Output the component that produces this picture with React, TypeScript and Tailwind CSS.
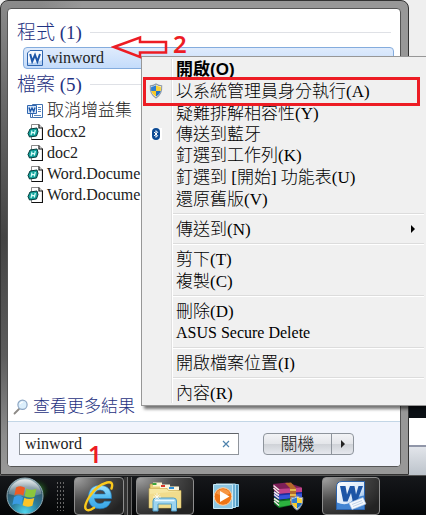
import React from 'react';
import { Bluetooth } from 'lucide-react';

type FileKind = 'doc' | 'shortcut';

const FILES: { name: string; kind: FileKind; cjk?: boolean }[] = [
  { name: '取消增益集', kind: 'doc', cjk: true },
  { name: 'docx2', kind: 'shortcut' },
  { name: 'doc2', kind: 'shortcut' },
  { name: 'Word.Docume', kind: 'shortcut' },
  { name: 'Word.Docume', kind: 'shortcut' },
];

interface MenuEntry {
  label: string;
  icon?: 'shield' | 'bluetooth';
  bold?: boolean;
  latin?: boolean;
  submenu?: boolean;
}

const MENU_GROUPS: MenuEntry[][] = [
  [
    { label: '開啟(O)', bold: true },
    { label: '以系統管理員身分執行(A)', icon: 'shield' },
    { label: '疑難排解相容性(Y)' },
    { label: '傳送到藍牙', icon: 'bluetooth' },
    { label: '釘選到工作列(K)' },
    { label: '釘選到 [開始] 功能表(U)' },
    { label: '還原舊版(V)' },
  ],
  [{ label: '傳送到(N)', submenu: true }],
  [{ label: '剪下(T)' }, { label: '複製(C)' }],
  [{ label: '刪除(D)' }, { label: 'ASUS Secure Delete', latin: true }],
  [{ label: '開啟檔案位置(I)' }],
  [{ label: '內容(R)' }],
];

const WordIcon = () => (
  <svg viewBox="0 0 16 16" className="w-4 h-4 shrink-0">
    <path d="M3 .5h12.5v15H.5V3z" fill="#f4f8fe" stroke="#2f66b0" />
    <path d="M1 12.500q7 2 14-2.500v5H1z" fill="#b7d2f3" />
    <path d="M3.200 4l2 7.500L8 5l2.400 6.500L13 4" fill="none" stroke="#1c56a8" strokeWidth="2" />
  </svg>
);

const DocIcon = () => (
  <svg viewBox="0 0 16 16" className="w-4 h-4 shrink-0">
    <path d="M5.500 1.500h10v13h-10z" fill="#fff" stroke="#3f6fae" />
    <path d="M11 4.500h3M11 6.500h3M11 8.500h3M7 12.500h7" stroke="#5684bd" />
    <path d="M.5 2.500h9v8h-9z" fill="#d5e5f8" stroke="#2f66b0" />
    <path d="M2 4.500l1.300 4L5 5l1.700 3.500 1.300-4" fill="none" stroke="#1c56a8" strokeWidth="1.400" />
    <path d="M3.500 10.500v4h2" fill="none" stroke="#3f6fae" />
  </svg>
);

const ShortcutIcon = () => (
  <svg viewBox="0 0 16 16" className="w-4 h-4 shrink-0">
    <path d="M4.500.5h7.500l3.500 3.500v11.500h-11z" fill="#fff" stroke="#8a8a8a" />
    <path d="M12 .5V4h3.500v11.500H4.500" fill="none" stroke="#111" strokeWidth="1.200" />
    <path d="M3 5l7-1 1 3.500-1.500 4.500-7 1-1.500-3.500z" fill="#12a39c" stroke="#053c3c" />
    <path d="M5 6.500L4 11M8.300 6L7.300 10.500M4.500 8.800l3.500-.5" fill="none" stroke="#d8fffa" strokeWidth="1.200" />
  </svg>
);

const ShieldIcon = ({ className }: { className: string }) => (
  <svg viewBox="0 0 16 18" className={className}>
    <path d="M8 1q3 2 6.500 2 .8 9.500-6.500 14Q.7 12.500 1.500 3 5 3 8 1z" fill="#fff" stroke="#8b98a7" strokeWidth="1.200" />
    <path d="M8 2.500v6.500H2.500q-.3-2.500 0-4.800Q5.500 4 8 2.500z" fill="#2e7dd1" />
    <path d="M8 2.500q2.500 1.500 5.500 1.700.3 2.300 0 4.800H8z" fill="#fad337" />
    <path d="M2.500 9H8v6.700Q3.500 13 2.500 9z" fill="#f7c929" />
    <path d="M8 9h5.500Q12.500 13 8 15.700z" fill="#2470c4" />
  </svg>
);

const SearchIcon = () => (
  <svg viewBox="0 0 16 16" className="w-4 h-4 shrink-0">
    <path d="M6 10l-4.500 4.500" stroke="#8d8a86" strokeWidth="1.800" strokeLinecap="round" />
    <circle cx="9.500" cy="5.800" r="4.600" fill="#dceffc" stroke="#8da6c4" strokeWidth="1.200" />
    <path d="M7 5q1-2 3-2" fill="none" stroke="#fff" strokeWidth="1.200" />
  </svg>
);

const StartOrb = () => (
  <svg viewBox="0 0 50 40" className="w-[50px] h-10">
    <defs>
      <radialGradient id="orb" cx=".5" cy=".95" r=".95">
        <stop offset="0" stopColor="#4fd6ee" />
        <stop offset=".4" stopColor="#2b7d9c" />
        <stop offset=".75" stopColor="#35586a" />
        <stop offset="1" stopColor="#a9bcc2" />
      </radialGradient>
      <radialGradient id="orbGlow">
        <stop offset="0" stopColor="#3fae3a" stopOpacity=".9" />
        <stop offset="1" stopColor="#0a200c" stopOpacity="0" />
      </radialGradient>
      <linearGradient id="orbShine" x1="0" y1="0" x2="0" y2="1">
        <stop offset="0" stopColor="#fff" stopOpacity=".75" />
        <stop offset="1" stopColor="#fff" stopOpacity=".15" />
      </linearGradient>
    </defs>
    <circle cx="38" cy="14" r="12" fill="url(#orbGlow)" />
    <circle cx="25" cy="20" r="18" fill="url(#orb)" stroke="#8fa9b3" />
    <path d="M8.500 18a16.600 16.600 0 0 1 33 0q-15 5-33 0z" fill="url(#orbShine)" />
    <path d="M16 11.500q4.500-2.800 9 .2l-1.700 8q-4.500-2.600-9-.2z" fill="#ee5a24" />
    <path d="M26.300 12.500q4.500 2.400 10.200.2l-1.900 8q-5 2-10-.4z" fill="#8cc63c" />
    <path d="M14 21q4.500-2.400 9 .2l-1.700 8q-4.500-2.600-9-.2z" fill="#3a9be4" />
    <path d="M24.300 21.700q4.500 2.400 10 .2l-1.900 7.800q-5 2.200-9.800-.4z" fill="#fcc428" />
  </svg>
);

const IeIcon = () => (
  <svg viewBox="0 0 32 32" className="w-8 h-8">
    <defs>
      <linearGradient id="ie" x1="0" y1="0" x2="0" y2="1">
        <stop offset="0" stopColor="#a5e4fc" />
        <stop offset=".5" stopColor="#54bdf2" />
        <stop offset="1" stopColor="#39a4e6" />
      </linearGradient>
    </defs>
    <path
      d="M28.500 18.500H11.500q.5 5 5.500 5 3 0 4.500-2.300h6.500Q25 28.800 17 28.800 5.500 28.500 5.300 17 5.800 5.500 17 5.200 29 5.700 28.500 18.500zM11.700 14h10.600q-.8-4-5.200-4-4.400 0-5.400 4z"
      fill="url(#ie)"
      stroke="#1c77b8"
      strokeWidth=".6"
      fillRule="evenodd"
    />
    <path d="M28.500 8.500Q31 1 24 2.500 14 5 6.500 16.500-.5 28 4 30q2.500 1 7-2.200" fill="none" stroke="#fbc91c" strokeWidth="2.400" strokeLinecap="round" />
  </svg>
);

const ExplorerIcon = () => (
  <svg viewBox="0 0 34 32" className="w-[34px] h-8">
    <path d="M2 4h9l2 3h17v18H2z" fill="#e7ce79" stroke="#a98b36" strokeWidth=".6" />
    <path d="M5 2.500h9v4H5z" fill="#fff6cf" />
    <path d="M4.500 3h4v2h-4z" fill="#3aa53a" />
    <path d="M12 4.500h10v4H12z" fill="#fdf6dd" />
    <path d="M13 5h4v2h-4z" fill="#d8372a" />
    <path d="M20 6.500h11v4H20z" fill="#fdf6dd" />
    <path d="M21 7h5v2h-5z" fill="#2d8fd8" />
    <path d="M1 8.500h18l1.500 2H33V28H1z" fill="#f6e7a2" stroke="#c8a84c" strokeWidth=".6" />
    <path d="M1.500 14L33 11v16.500H1.500z" fill="#efd67f" opacity=".6" />
    <path d="M5 31V21q0-3 3-3h17.500q3 0 3 3v10h-5v-7h-13.500v7z" fill="#9dd4ef" stroke="#4f9cc5" />
    <path d="M7 20.500h19.500" stroke="#e8f8ff" strokeWidth="1.500" />
    <path d="M9 13v8M5 17h8M6.500 14.500l5 5M11.500 14.500l-5 5" stroke="#fff" strokeWidth=".7" />
  </svg>
);

const PlayerIcon = () => (
  <svg viewBox="0 0 28 28" className="w-7 h-7">
    <path d="M7 2.500h19.500v22H7z" fill="#4d96bd" stroke="#9bd0ea" />
    <path d="M4 2h19.500v23.500H4z" fill="#6db0d4" stroke="#b5e0f2" />
    <path d="M1.500 2.500h19v24h-19z" fill="#8cc6e2" stroke="#c8e9f6" />
    <circle cx="11" cy="14.500" r="8.800" fill="#ee7414" stroke="#ffd1a2" />
    <path d="M4 11.500a8 8 0 0 1 14 0q-6 4-14 0z" fill="#fba557" opacity=".7" />
    <path d="M8 9l9.500 5.500L8 20z" fill="#fff" />
  </svg>
);

const RarIcon = () => (
  <div className="relative w-8 h-7">
    <svg viewBox="0 0 32 28" className="w-8 h-7">
      <path d="M1 2l14-1.500L29 5v6L7 12l-5-3z" fill="#7d1f58" />
      <path d="M7 7l23-1.500V10L7 12z" fill="#c0448a" />
      <path d="M2 9l5 3 23-2v5L7 18l-5-3z" fill="#1a2ea4" />
      <path d="M7 13.500l23-2V15L7 17.500z" fill="#3554da" />
      <path d="M2 15l5 3 23-3v6L7 26l-5-4z" fill="#0c7024" />
      <path d="M7 19.500L30 17v4L7 25z" fill="#2cb33f" />
      <path d="M1.500 3.500L7 8M1.500 6L7 11M2 10l5 3.500M2 12.500l5 4M2 16.500l5 3.500M2 19l5 4.500" stroke="#f3e7e7" strokeWidth="1.600" />
      <path d="M13 1l6-.5L24 6v17h-6V6z" fill="#b5692b" />
      <path d="M18 8h6M18 13h6M18 18h6" stroke="#f2d45b" strokeWidth="1.500" />
    </svg>
    <ShieldIcon className="absolute -bottom-px right-0 w-[14px] h-4" />
  </div>
);

const WordAppIcon = () => (
  <svg viewBox="0 0 32 32" className="w-8 h-8">
    <defs>
      <linearGradient id="wordPage" x1="0" y1="0" x2="1" y2="1">
        <stop offset="0" stopColor="#ffffff" />
        <stop offset=".6" stopColor="#d6e6f8" />
        <stop offset="1" stopColor="#3f82cf" />
      </linearGradient>
    </defs>
    <path d="M7 1.500h22.500v28H1.500V7q0-5.500 5.500-5.500z" fill="url(#wordPage)" stroke="#2b62ab" />
    <path d="M2 22.500q12 5 18-5l9-2V29H2z" fill="#4284d2" />
    <path d="M5 6h5.500l1.500 8.500L15 6h4.500l1.500 8.500L23.500 6H28l-6 15.500h-4.200L16 13l-3.500 8.500H8.300z" fill="#1d55a6" />
    <path d="M14 23l14-5.500 3 6.500-14 5.500z" fill="#f4f8fd" stroke="#a9c3e2" strokeWidth=".6" />
    <path d="M17 24.500l10-4M18 26.500l10-4" stroke="#c3d4e9" />
  </svg>
);

const SectionHeading = ({ children }: { children: React.ReactNode }) => (
  <h2 className="flex h-[30px] items-center gap-2 px-[9px] text-[19px] leading-none text-[#1f3282]">
    <span className="whitespace-nowrap">{children}</span>
    <span className="h-px flex-1 bg-[#dfe1e6]" />
  </h2>
);

const ContextMenu = () => (
  <div
    role="menu"
    className="absolute left-[141px] right-0 top-14 border border-r-0 border-[#979797] bg-[#f0f0f0] py-px text-[17px] text-black shadow-[3px_3px_3px_rgba(0,0,0,0.55)]"
  >
    <div className="absolute inset-y-0.5 left-[29px] w-0.5 border-l border-[#e0e0e0] bg-white" />
    {MENU_GROUPS.map((group, g) => (
      <div key={g}>
        {g > 0 && (
          <div className="ml-[31px] mr-0.5 flex h-2 items-center">
            <div className="h-0.5 w-full border-t border-[#dcdcdc] bg-white" />
          </div>
        )}
        {group.map((item) => (
          <button
            key={item.label}
            role="menuitem"
            className={`relative flex w-full items-center text-left leading-none whitespace-nowrap ${item.icon === 'bluetooth' ? 'h-5' : 'h-[22px]'}`}
          >
            <span className="flex w-[34px] shrink-0 justify-center pr-[7px]">
              {item.icon === 'shield' && <ShieldIcon className="h-4 w-[14px]" />}
              {item.icon === 'bluetooth' && (
                <span className="flex h-3 w-3 items-center justify-center bg-white">
                  <span className="flex h-3 w-2 items-center justify-center rounded-full bg-[#0c4a94] text-white">
                    <Bluetooth className="h-2.5 w-2.5" strokeWidth={3} />
                  </span>
                </span>
              )}
            </span>
            <span
              className={
                item.bold
                  ? "font-['Liberation_Sans','Noto_Sans_CJK_TC',sans-serif] font-bold"
                  : item.latin
                    ? 'text-base leading-none'
                    : ''
              }
            >
              {item.label}
            </span>
            {item.submenu && (
              <svg viewBox="0 0 4 8" className="ml-auto mr-[11px] h-2 w-1">
                <path d="M0 0l4 4-4 4z" fill="#000" />
              </svg>
            )}
          </button>
        ))}
      </div>
    ))}
  </div>
);

const StartMenu = () => (
  <section className="min-w-0 flex-1 rounded-t-lg border border-[#333] bg-[linear-gradient(90deg,transparent_10%,#989898_20%),linear-gradient(180deg,#8b8b8b,#6a6a6a_20%,#434343_50%,#5c5c5c_75%,#8c8c8c_92%,#999)] pb-[7px] pl-1.5 pr-[7px] pt-[7px]">
    <div className="flex h-full flex-col overflow-hidden rounded border border-[#555] bg-white">
      <div className="pt-2">
        <SectionHeading>程式 (1)</SectionHeading>
        <button className="ml-[15px] mr-1.5 flex h-[22px] w-[calc(100%-21px)] items-center gap-1 rounded-sm border border-[#84acdd] bg-gradient-to-b from-[#dfebfc] to-[#c4dcfb] pl-[3px] text-base leading-none">
          <WordIcon />
          winword
        </button>
        <SectionHeading>檔案 (5)</SectionHeading>
        <ul className="pt-px pl-[19px]">
          {FILES.map((file, i) => (
            <li key={i}>
              <button className={`flex h-[21px] items-center gap-1 whitespace-nowrap leading-none ${file.cjk ? 'text-[17px]' : 'text-base'}`}>
                {file.kind === 'doc' ? <DocIcon /> : <ShortcutIcon />}
                <span className="leading-none">{file.name}</span>
              </button>
            </li>
          ))}
        </ul>
      </div>
      <a href="#" className="mt-auto flex items-center gap-1 pb-1 pl-[5px] text-[17px] leading-5 text-[#1f3282]">
        <SearchIcon />
        查看更多結果
      </a>
      <div className="flex h-[45px] items-center gap-6 border-t border-[#c3d6e6] bg-[#f1f4fc] pl-[11px] pr-[46px]">
        <div className="flex h-[22px] min-w-0 flex-1 items-center border border-[#8f949b] border-t-[#5f6368] bg-white">
          <input
            aria-label="搜尋"
            defaultValue="winword"
            className="min-w-0 flex-1 pl-[5px] text-base leading-5 text-[#222] outline-none"
          />
          <button aria-label="清除" className="mr-2 text-[#4f83ad]">
            <svg viewBox="0 0 8 8" className="h-2 w-2">
              <path d="M1 1l6 6M7 1L1 7" stroke="currentColor" strokeWidth="1.200" />
            </svg>
          </button>
        </div>
        <div className="flex h-[22px] shrink-0 rounded-sm border border-[#8e949c] bg-[linear-gradient(#f2f3f6,#e3e5e9_50%,#cfd2d7_52%,#e6e8ee)]">
          <button className="w-[67px] text-[17px] leading-none">關機</button>
          <button aria-label="更多選項" className="flex w-[22px] items-center justify-center border-l border-[#8e949c]">
            <svg viewBox="0 0 4 8" className="h-2 w-1">
              <path d="M0 0l4 4-4 4z" fill="#222" />
            </svg>
          </button>
        </div>
      </div>
    </div>
  </section>
);

const TASK_BUTTON =
  'flex h-[38px] shrink-0 items-center justify-center rounded-sm border border-[#8d8d8d] bg-[radial-gradient(ellipse_at_top_left,#a4a4a4,#4a4a4a_45%,#232323_85%)]';

const Taskbar = () => (
  <nav className="flex h-10 items-center overflow-hidden border-t border-[#555] bg-gradient-to-b from-[#16181b] to-[#050607]">
    <button aria-label="開始" className="shrink-0">
      <StartOrb />
    </button>
    <div className="ml-1.5 h-[30px] w-2 shrink-0 bg-[radial-gradient(circle,#666_1px,transparent_1px)] bg-[size:3px_4px]" />
    <button aria-label="Internet Explorer" className={`${TASK_BUTTON} ml-2.5 w-[50px]`}>
      <IeIcon />
    </button>
    <div className="h-[38px] w-1 border-r border-[#777] bg-[#333]" />
    <div className="mr-1 h-[38px] w-1 border-r border-[#666] bg-[#222]" />
    <button aria-label="檔案總管" className={`${TASK_BUTTON} w-[58px]`}>
      <ExplorerIcon />
    </button>
    <button aria-label="Media Player" className="ml-[18px] shrink-0">
      <PlayerIcon />
    </button>
    <button aria-label="WinRAR" className="ml-8 shrink-0">
      <RarIcon />
    </button>
    <button aria-label="Word" className={`${TASK_BUTTON} ml-[18px] w-[58px]`}>
      <WordAppIcon />
    </button>
  </nav>
);

// Red marks laid over the menu: step numbers, the arrow and the frame round the second item
const Annotations = () => (
  <div className="pointer-events-none font-['Noto_Sans',sans-serif] text-[24px] font-semibold leading-none text-[#ed1c24]">
    <svg viewBox="0 0 58 26" className="absolute left-[111px] top-[34px] h-[26px] w-[58px]">
      <path d="M3 13L29 3.500V8h26v10.500H29V23z" fill="none" stroke="#ed1c24" strokeWidth="2.500" />
    </svg>
    <span className="absolute left-[173px] top-8">2</span>
    <span className="absolute left-[88px] top-[442px]">1</span>
    <div className="absolute left-[143px] right-1.5 top-[77px] h-[29px] border-[3px] border-[#ed1c24]" />
  </div>
);

const App: React.FC = () => {
  return (
    <div className="relative flex min-h-screen flex-col overflow-hidden bg-[#efefef] font-['Liberation_Serif','Noto_Sans_CJK_TC',serif] font-light text-[#222]">
      <main className="flex flex-1">
        <StartMenu />
        <aside className="flex w-[17px] shrink-0 flex-col justify-end">
          <div className="h-3 bg-[#0b1015]" />
          <div className="h-[27px] bg-white" />
          <div className="h-[30px] border-t-2 border-[#9096a8] bg-gradient-to-b from-[#e2e5ea] to-[#bcc3cb]" />
        </aside>
      </main>
      <Taskbar />
      <ContextMenu />
      <Annotations />
    </div>
  );
};

export default App;
